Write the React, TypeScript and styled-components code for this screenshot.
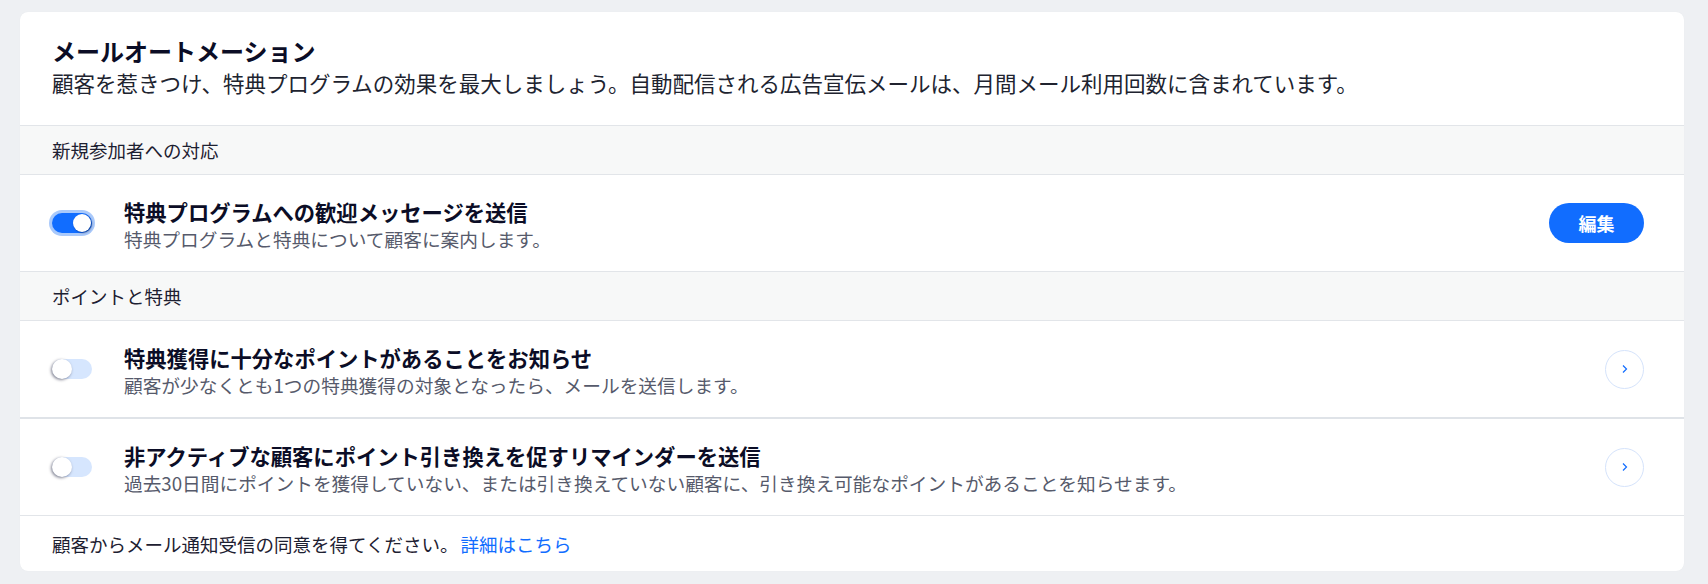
import React from 'react';
import styled, { createGlobalStyle } from 'styled-components';

const GlobalStyle = createGlobalStyle`
  html, body {
    margin: 0;
    padding: 0;
    background: #eef0f3;
  }
  body {
    font-family: 'Noto Sans CJK JP', 'Noto Sans', sans-serif;
  }
`;

const Page = styled.div`
  padding: 12px 24px 13px 20px;
  box-sizing: border-box;
  width: 1708px;
  height: 584px;
`;

const Card = styled.section`
  background: #ffffff;
  border-radius: 8px;
  overflow: hidden;
  box-shadow: 0 0 1px rgba(22, 45, 61, 0.06);
`;

const Header = styled.header`
  padding: 23px 40px 26px 32px;
`;

const Title = styled.h2`
  margin: 0;
  font-size: 24px;
  line-height: 32px;
  font-weight: 700;
  color: #0b0d26;
`;

const Subtitle = styled.p`
  margin: 0;
  font-size: 21.5px;
  line-height: 32px;
  color: #20232f;
`;

const SectionHeader = styled.div`
  background: #f7f8f8;
  border-top: 1px solid #e2e5e9;
  border-bottom: 1px solid #e2e5e9;
  padding: 0 32px;
  height: 48px;
  display: flex;
  align-items: center;
  font-size: 18.5px;
  color: #1d2031;
`;

const Row = styled.div<{ $thick?: boolean }>`
  display: flex;
  align-items: center;
  gap: 32px;
  padding: 0 40px 0 32px;
  height: 96px;
  border-top: ${(p) => (p.$thick ? '2px solid #dfe3e8' : 'none')};
  box-sizing: content-box;
`;

const RowText = styled.div`
  flex: 1;
  display: flex;
  flex-direction: column;
  margin-top: 4px;
`;

const RowTitle = styled.span`
  font-size: 21.3px;
  line-height: 27px;
  font-weight: 700;
  color: #0b0d26;
`;

const RowDesc = styled.span`
  font-size: 18.7px;
  line-height: 27px;
  color: #565a6b;
`;

const Track = styled.span<{ $on: boolean }>`
  position: relative;
  flex: none;
  width: 40px;
  height: 20px;
  border-radius: 10px;
  background: ${(p) => (p.$on ? '#116dff' : '#d6e6fe')};
  box-shadow: ${(p) => (p.$on ? '0 0 0 3px #a9c9fb' : 'none')};
`;

const Knob = styled.span<{ $on: boolean }>`
  position: absolute;
  top: ${(p) => (p.$on ? '1px' : '0')};
  left: ${(p) => (p.$on ? '21px' : '0')};
  width: ${(p) => (p.$on ? '18px' : '20px')};
  height: ${(p) => (p.$on ? '18px' : '20px')};
  border-radius: 50%;
  background: #ffffff;
  box-shadow: ${(p) =>
    p.$on ? '1px 1px 2px rgba(0, 6, 36, 0.45)' : '-1px 1px 3px rgba(0, 6, 36, 0.5)'};
`;

const EditButton = styled.button`
  flex: none;
  width: 95px;
  height: 40px;
  border: none;
  border-radius: 20px;
  background: #116dff;
  color: #ffffff;
  font-family: inherit;
  font-size: 18px;
  font-weight: 700;
  cursor: pointer;
`;

const ChevronButton = styled.button`
  flex: none;
  width: 39px;
  height: 39px;
  border-radius: 50%;
  border: 1px solid #d5e3fb;
  background: #ffffff;
  display: flex;
  align-items: center;
  justify-content: center;
  padding: 0;
  cursor: pointer;
`;

const Footer = styled.footer`
  border-top: 1px solid #e2e5e9;
  height: 55px;
  padding: 0 32px;
  display: flex;
  align-items: center;
  font-size: 18.5px;
  color: #1d2031;
`;

const Link = styled.a`
  color: #116dff;
  text-decoration: none;
  margin-left: 2px;
`;

function Toggle({ on }: { on: boolean }): JSX.Element {
  return (
    <Track $on={on}>
      <Knob $on={on} />
    </Track>
  );
}

function Chevron(): JSX.Element {
  return (
    <svg width="10" height="12" viewBox="0 0 10 12" fill="none">
      <path d="M3 2.5 L6.5 6 L3 9.5" stroke="#116dff" strokeWidth="1.2" />
    </svg>
  );
}

interface Item {
  title: string;
  desc: string;
  on: boolean;
  edit?: boolean;
  thick?: boolean;
}

const welcome: Item[] = [
  {
    title: '特典プログラムへの歓迎メッセージを送信',
    desc: '特典プログラムと特典について顧客に案内します。',
    on: true,
    edit: true,
  },
];

const points: Item[] = [
  {
    title: '特典獲得に十分なポイントがあることをお知らせ',
    desc: '顧客が少なくとも1つの特典獲得の対象となったら、メールを送信します。',
    on: false,
  },
  {
    title: '非アクティブな顧客にポイント引き換えを促すリマインダーを送信',
    desc: '過去30日間にポイントを獲得していない、または引き換えていない顧客に、引き換え可能なポイントがあることを知らせます。',
    on: false,
    thick: true,
  },
];

function AutomationRow({ item }: { item: Item }): JSX.Element {
  return (
    <Row $thick={item.thick}>
      <Toggle on={item.on} />
      <RowText>
        <RowTitle>{item.title}</RowTitle>
        <RowDesc>{item.desc}</RowDesc>
      </RowText>
      {item.edit ? (
        <EditButton>編集</EditButton>
      ) : (
        <ChevronButton aria-label="open">
          <Chevron />
        </ChevronButton>
      )}
    </Row>
  );
}

export default function App(): JSX.Element {
  return (
    <>
      <GlobalStyle />
      <Page>
        <Card>
          <Header>
            <Title>メールオートメーション</Title>
            <Subtitle>
              顧客を惹きつけ、特典プログラムの効果を最大しましょう。自動配信される広告宣伝メールは、月間メール利用回数に含まれています。
            </Subtitle>
          </Header>
          <SectionHeader>新規参加者への対応</SectionHeader>
          {welcome.map((item) => (
            <AutomationRow key={item.title} item={item} />
          ))}
          <SectionHeader>ポイントと特典</SectionHeader>
          {points.map((item) => (
            <AutomationRow key={item.title} item={item} />
          ))}
          <Footer>
            顧客からメール通知受信の同意を得てください。
            <Link href="#">詳細はこちら</Link>
          </Footer>
        </Card>
      </Page>
    </>
  );
}
